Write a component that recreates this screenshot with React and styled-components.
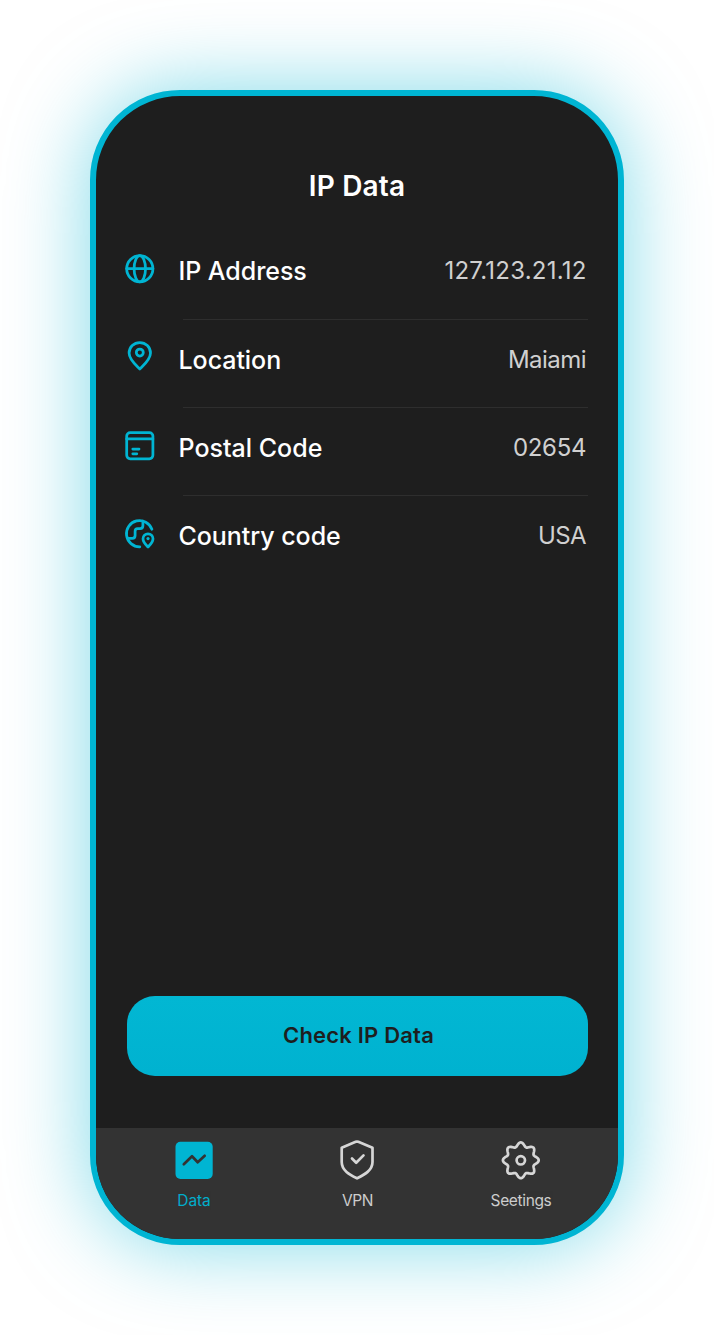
import React from "react";
import styled, { createGlobalStyle } from "styled-components";

const GlobalStyle = createGlobalStyle`
  * { box-sizing: border-box; }
  body {
    margin: 0;
    background: #fff;
    font-family: Inter, "Liberation Sans", sans-serif;
  }
`;

const Stage = styled.main`
  height: 1335px;
  padding: 90px;
  overflow: hidden;
`;

const Phone = styled.section`
  width: 534px;
  height: 1155px;
  display: flex;
  flex-direction: column;
  border: 6px solid #00b5d3;
  border-radius: 90px;
  background: #1e1e1e;
  box-shadow: 0 0 84px rgba(0, 181, 211, 0.5);
  overflow: hidden;
`;

const Title = styled.h1`
  margin: 73px 0 0;
  text-align: center;
  font-size: 28px;
  line-height: 35px;
  font-weight: 600;
  letter-spacing: ${(p) => p.$track}px;
  color: #fff;
`;

const List = styled.ul`
  flex: 1;
  margin: 28px 30px 0 28px;
  padding: 0;
  list-style: none;
`;

const Row = styled.li`
  height: 88.2px;
  display: flex;
`;

const RowIcon = styled.svg`
  display: block;
  flex: none;
  width: 32px;
  height: 32px;
  margin-top: ${(p) => p.$top}px;
  fill: none;
  stroke: #00b5d3;
  stroke-width: 2.75;
  stroke-linecap: round;
  stroke-linejoin: round;
`;

const RowBody = styled.div`
  flex: 1;
  display: flex;
  justify-content: space-between;
  margin-left: 27px;
  padding: 21.4px 1.5px 0 0;
  background: ${(p) =>
    p.$last ? "none" : "linear-gradient(#2e2e2e, #2e2e2e) right bottom / 100% 1.3px no-repeat"};
`;

const Label = styled.span`
  margin-left: -4.5px;
  font-size: 25px;
  line-height: 36px;
  font-weight: 500;
  letter-spacing: ${(p) => p.$track}px;
  color: #fff;
`;

const Value = styled.span`
  font-size: 24px;
  line-height: 36px;
  letter-spacing: ${(p) => p.$track}px;
  margin-right: ${(p) => -p.$track}px;
  font-weight: 400;
  color: #d0d0d0;
`;

const CheckButton = styled.button`
  flex: none;
  height: 80px;
  margin: 0 30px 51.5px 31px;
  padding: 0 0 2px 2px;
  border: 0;
  border-radius: 28px;
  background: linear-gradient(#02b7d3, #00b2d0);
  font: 600 22px/78px Inter, "Liberation Sans", sans-serif;
  letter-spacing: ${(p) => p.$track}px;
  color: #1e1e1e;
`;

const TabBar = styled.nav`
  flex: none;
  height: 111.5px;
  display: grid;
  grid-template-columns: repeat(3, 163.5px);
  justify-content: center;
  padding-top: 11.5px;
  background: #333;
`;

const Tab = styled.a`
  display: flex;
  flex-direction: column;
  align-items: center;
  color: ${(p) => (p.$active ? "#00b5d3" : "#d6d6d6")};
`;

const TabIcon = styled.svg`
  display: block;
  width: 42px;
  height: 42px;
  fill: none;
  stroke: currentColor;
  stroke-width: 2.7;
  stroke-linecap: round;
  stroke-linejoin: round;
`;

const TabLabel = styled.span`
  margin: 10px 0 0 1px;
  font-size: 15.5px;
  line-height: 20px;
  font-weight: 400;
  letter-spacing: ${(p) => p.$track}px;
  opacity: 0.95;
`;

const GlobeIcon = () => (
  <RowIcon viewBox="0 0 32 32" $top={21}>
    <circle cx="15.8" cy="15.7" r="13.1" />
    <ellipse cx="15.8" cy="15.7" rx="5.7" ry="13.1" />
    <path d="M2.7 15.7h26.2" />
  </RowIcon>
);

const PinIcon = () => (
  <RowIcon viewBox="0 0 32 32" $top={20}>
    <path d="M15.8 29C12 25.2 5.1 19.8 5.1 13.1C5.1 6.900 9.900 2.500 15.8 2.500S26.500 6.900 26.500 13.1C26.500 19.8 19.6 25.2 15.8 29Z" />
    <circle cx="15.8" cy="12.5" r="3.5" />
  </RowIcon>
);

const CardIcon = () => (
  <RowIcon viewBox="0 0 32 32" $top={21.2}>
    <rect x="2.7" y="2.6" width="26.2" height="26.2" rx="3.5" />
    <path d="M2.7 8.900h26.2M8.800 19h6.200M8.800 23.800h4" />
  </RowIcon>
);

const GlobePinIcon = () => (
  <RowIcon viewBox="0 0 32 32" $top={21}>
    <path d="M27.9 11.3A13.1 13.1 0 1 0 15.8 28.8" />
    <path d="M18.9 3v4.7c0 1.800-1 2.800-2.800 2.800h-2.400c-1.800 0-2.600 1-2.600 2.800v4.200c0 1.800-.9 2.800-2.800 2.800H3.700" />
    <path d="M24 29c-2-1.900-5-4.700-5-8.200a5 5 0 0 1 10 0c0 3.500-3 6.300-5 8.200Z" />
    <circle cx="24" cy="20.6" r="1.6" fill="#00b5d3" stroke="none" />
  </RowIcon>
);

const rows = [
  { Icon: GlobeIcon, label: "IP Address", value: "127.123.21.12", track: -0.05, vtrack: 0.25 },
  { Icon: PinIcon, label: "Location", value: "Maiami", track: -0.05, vtrack: -0.55 },
  { Icon: CardIcon, label: "Postal Code", value: "02654", track: 0, vtrack: -0.3 },
  { Icon: GlobePinIcon, label: "Country code", value: "USA", track: -0.05, vtrack: -0.7 },
];

const gearPath = (() => {
  let d = "";
  const n = 160;
  for (let i = 0; i < n; i++) {
    const a = (i / n) * Math.PI * 2;
    const r = 15.9 + 2 * Math.cos(8 * a);
    d += `${i ? "L" : "M"}${(20.8 + r * Math.sin(a)).toFixed(2)} ${(21.3 - r * Math.cos(a)).toFixed(2)}`;
  }
  return d + "Z";
})();

const ChartIcon = () => (
  <TabIcon viewBox="0 0 42 42">
    <rect x="2.5" y="2.7" width="37.2" height="37.2" rx="5" fill="#00b5d3" stroke="none" />
    <path d="M10.8 25.3l8.200-8 5.700 6 7-6.500" stroke="#333" />
  </TabIcon>
);

const ShieldIcon = () => (
  <TabIcon viewBox="0 0 42 42">
    <path d="M19.7 2.8Q21 2.3 22.3 2.8L36.5 8.8V23C36.5 31.5 28.5 35.5 21 39.3C13.5 35.5 5.7 31.5 5.7 23V8.8Z" />
    <path d="M16 19.5l4.200 4.200 7.300-7.300" />
  </TabIcon>
);

const GearIcon = () => (
  <TabIcon viewBox="0 0 42 42">
    <path d={gearPath} />
    <circle cx="20.8" cy="21.3" r="4.2" />
  </TabIcon>
);

export default function App() {
  return (
    <>
      <GlobalStyle />
      <Stage>
        <Phone>
          <Title $track={0.15}>IP Data</Title>
          <List>
            {rows.map(({ Icon, label, value, track, vtrack }, i) => (
              <Row key={label}>
                <Icon />
                <RowBody $last={i === rows.length - 1}>
                  <Label $track={track}>{label}</Label>
                  <Value $track={vtrack}>{value}</Value>
                </RowBody>
              </Row>
            ))}
          </List>
          <CheckButton $track={0.2}>Check IP Data</CheckButton>
          <TabBar>
            <Tab $active>
              <ChartIcon />
              <TabLabel $track={-0.1}>Data</TabLabel>
            </Tab>
            <Tab>
              <ShieldIcon />
              <TabLabel $track={-0.5}>VPN</TabLabel>
            </Tab>
            <Tab>
              <GearIcon />
              <TabLabel $track={-0.35}>Seetings</TabLabel>
            </Tab>
          </TabBar>
        </Phone>
      </Stage>
    </>
  );
}
